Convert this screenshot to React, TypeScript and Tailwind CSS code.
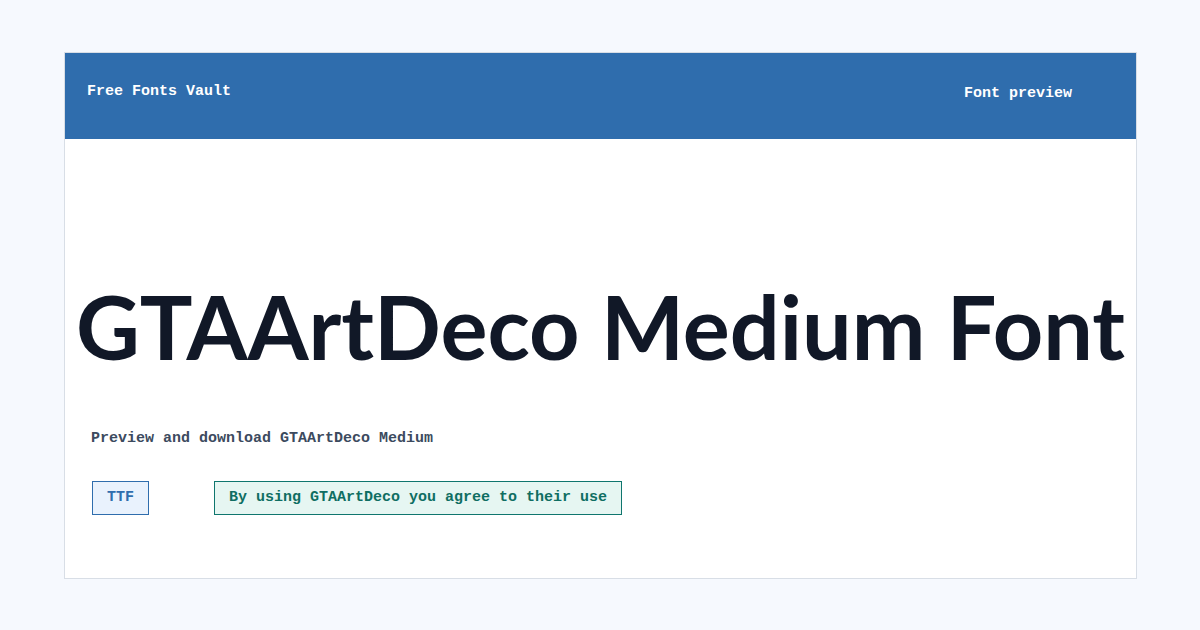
export default function App() {
  const mono = { fontFamily: '"Liberation Mono", "DejaVu Sans Mono", monospace' };
  return (
    <div className="w-[1200px] h-[630px] bg-[#f6f9fe] pt-[52px] pl-[64px]">
      <div className="w-[1073px] h-[527px] bg-white border border-[#d8dee6] flex flex-col" style={mono}>
        <header className="h-[86px] shrink-0 bg-[#2f6dad] flex items-start justify-between pl-[22px] pr-[64px] text-white text-[15px] font-semibold">
          <span className="mt-[28px]">Free Fonts Vault</span>
          <span className="mt-[30px]">Font preview</span>
        </header>
        <div className="h-[143px] shrink-0" />
        <h1
          className="text-center whitespace-nowrap text-[#111827] text-[88px] font-bold leading-none"
          style={{ fontFamily: 'Lato, "Noto Sans", sans-serif' }}
        >
          GTAArtDeco Medium Font
        </h1>
        <p className="mt-[58px] ml-[26px] text-[15px] leading-[22px] text-[#3c4a5e] font-semibold">
          Preview and download GTAArtDeco Medium
        </p>
        <div className="mt-[31px] ml-[27px] flex items-center gap-[65px] text-[15px] font-semibold">
          <span className="h-[34px] px-[14px] flex items-center border border-[#2f6dad] bg-[#e9f2fd] text-[#2f6dad]">
            TTF
          </span>
          <span className="h-[34px] px-[14px] flex items-center border border-[#0f766e] bg-[#e6f6f2] text-[#0f6e62]">
            By using GTAArtDeco you agree to their use
          </span>
        </div>
      </div>
    </div>
  );
}
